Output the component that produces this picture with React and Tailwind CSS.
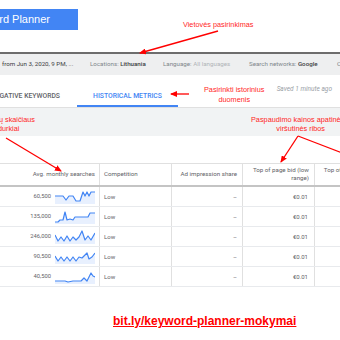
const sparks = [
  '0,6 8,6 11,10 14,6 18,6 21,11 25,11 28,2 30,6 32,2 34,6 36,2 40,2',
  '0,12 3,12 5,10 8,10 10,2 12,10 15,9 18,10 20,7 33,7 35,3 40,3',
  '0,5 3,11 6,7 9,11 12,6 15,11 18,7 21,10 24,7 27,1 30,10 33,6 36,10 40,3',
  '0,6 3,11 6,7 9,11 12,7 15,11 18,7 21,11 24,7 27,8 32,3 34,9 37,7 40,3',
  '0,11 10,11 13,12 18,11 26,11 29,8 32,11 36,3 38,6 40,7',
]

const rows = ['60,500', '135,000', '246,000', '90,500', '40,500']

function Spark({ points }) {
  return (
    <svg width="40" height="14" viewBox="0 0 40 14" className="shrink-0">
      <polygon points={points + ' 40,14 0,14'} fill="#e8f0fe" />
      <polyline points={points} fill="none" stroke="#4285f4" strokeWidth="1.2" strokeLinejoin="round" />
    </svg>
  )
}

export default function App() {
  return (
    <div className="relative w-[340px] h-[340px] overflow-hidden bg-white font-['Roboto',sans-serif]">
      {/* Header */}
      <div className="h-[52px] pt-[9px]">
        <div className="w-[78px] h-[21px] bg-[#4285f4] flex items-center justify-end pr-[28px] overflow-hidden">
          <span className="shrink-0 whitespace-nowrap text-white text-[11px] font-['Liberation_Sans',sans-serif]">
            Keyword Planner
          </span>
        </div>
      </div>

      {/* Filter bar */}
      <div className="h-[2px] bg-[#6d6d6d]" />
      <div className="h-[21px] bg-[#eeeff0] flex items-center text-[6.2px] whitespace-nowrap overflow-hidden">
        <div className="w-[90px] shrink-0 pl-[2px] text-[#3c4043]">from Jun 3, 2020, 9 PM, ...</div>
        <div className="w-[73px] shrink-0 text-[#80868b]">
          Locations: <span className="text-[#3c4043] font-medium">Lithuania</span>
        </div>
        <div className="w-[86px] shrink-0 text-[#80868b]">
          Language: <span className="text-[#b0b4b8]">All languages</span>
        </div>
        <div className="w-[88px] shrink-0 text-[#80868b]">
          Search networks: <span className="text-[#3c4043] font-medium">Google</span>
        </div>
        <div className="shrink-0 text-[#80868b]">Co</div>
      </div>

      {/* Tabs */}
      <div className="h-[32px] flex">
        <div className="w-[77px] flex items-end justify-end pb-[6px] pr-[17px] overflow-hidden">
          <span className="shrink-0 whitespace-nowrap text-[6.8px] font-medium text-[#5f6368]">NEGATIVE KEYWORDS</span>
        </div>
        <div className="w-[101px] flex items-end justify-center pb-[4px] border-b-2 border-[#4285f4]">
          <span className="whitespace-nowrap text-[6.8px] font-medium text-[#4285f4]">HISTORICAL METRICS</span>
        </div>
        <div className="flex-1 flex items-end justify-end pr-[8px] pb-[12px]">
          <span className="whitespace-nowrap text-[6.5px] italic text-[#9aa0a6]">Saved 1 minute ago</span>
        </div>
      </div>

      <div className="h-[29px] bg-[#f1f3f4] border-t border-[#e0e0e0]" />
      <div className="h-[27px]" />

      {/* Table */}
      <div className="text-[6px] text-[#5f6368] whitespace-nowrap">
        <div className="h-[24px] flex text-[6.2px] border-t border-b-2 border-t-[#e0e0e0] border-b-[#c4c4c4]">
          <div className="w-[100px] shrink-0 flex items-center justify-end pr-[4px] border-r border-[#e0e0e0]">
            Avg. monthly searches
          </div>
          <div className="w-[72px] shrink-0 flex items-center pl-[4px] border-r border-[#e0e0e0]">Competition</div>
          <div className="w-[71px] shrink-0 flex items-center justify-end pr-[5px] border-r border-[#e0e0e0]">
            Ad impression share
          </div>
          <div className="w-[72px] shrink-0 flex items-center justify-end pr-[5px] text-right leading-[7.5px] border-r border-[#e0e0e0]">
            <span>
              Top of page bid (low
              <br />
              range)
            </span>
          </div>
          <div className="w-[72px] shrink-0 flex items-center justify-end pr-[5px] text-right leading-[7.5px]">
            <span>
              Top of page bid (high
              <br />
              range)
            </span>
          </div>
        </div>

        {rows.map((n, i) => (
          <div key={n} className="h-[20px] flex border-b border-[#e8eaed]">
            <div className="w-[100px] shrink-0 flex items-center justify-end gap-[4px] pr-[4px] border-r border-[#e0e0e0]">
              <span className="text-[5.8px]">{n}</span>
              <Spark points={sparks[i]} />
            </div>
            <div className="w-[72px] shrink-0 flex items-center pl-[4px] border-r border-[#e0e0e0]">Low</div>
            <div className="w-[71px] shrink-0 flex items-center justify-end pr-[5px] border-r border-[#e0e0e0]">–</div>
            <div className="w-[72px] shrink-0 flex items-center justify-end pr-[6px] border-r border-[#e0e0e0]">
              €0.01
            </div>
            <div className="w-[72px] shrink-0" />
          </div>
        ))}
      </div>

      {/* Link */}
      <div className="mt-[21px] pl-[113px]">
        <span className="text-[12px] font-bold underline text-[#ff0000] font-['Liberation_Sans',sans-serif] whitespace-nowrap">
          bit.ly/keyword-planner-mokymai
        </span>
      </div>

      {/* Annotations */}
      <div className="absolute inset-0 pointer-events-none font-['Liberation_Sans',sans-serif] text-[#ff1f1f] text-[7.3px] leading-[9.5px] whitespace-nowrap">
        <div className="absolute left-[183px] top-[20px]">Vietovės pasirinkimas</div>
        <div className="absolute left-[204px] top-[85px] text-center">
          Pasirinkti istorinius
          <br />
          duomenis
        </div>
        <div className="absolute right-[305px] top-[115px] text-center leading-[9px]">
          Paieškų skaičiaus
          <br />
          vidurkiai
        </div>
        <div className="absolute left-[251px] top-[115px] text-center leading-[9px]">
          Paspaudimo kainos apatinės ir
          <br />
          viršutinės ribos
        </div>
        <svg width="340" height="340" className="absolute inset-0">
          <defs>
            <marker id="ah" markerWidth="7" markerHeight="6" refX="6" refY="3" orient="auto" markerUnits="userSpaceOnUse">
              <path d="M0,0 L7,3 L0,6 z" fill="#ff0000" />
            </marker>
          </defs>
          <g stroke="#ff0000" strokeWidth="1.3" fill="none">
            <line x1="218" y1="31" x2="140" y2="53" markerEnd="url(#ah)" />
            <line x1="189" y1="94" x2="171" y2="94" markerEnd="url(#ah)" />
            <line x1="6" y1="138" x2="61" y2="171" markerEnd="url(#ah)" />
            <line x1="298" y1="136" x2="281" y2="162" markerEnd="url(#ah)" />
            <line x1="298" y1="136" x2="350" y2="156" />
          </g>
        </svg>
      </div>
    </div>
  )
}
